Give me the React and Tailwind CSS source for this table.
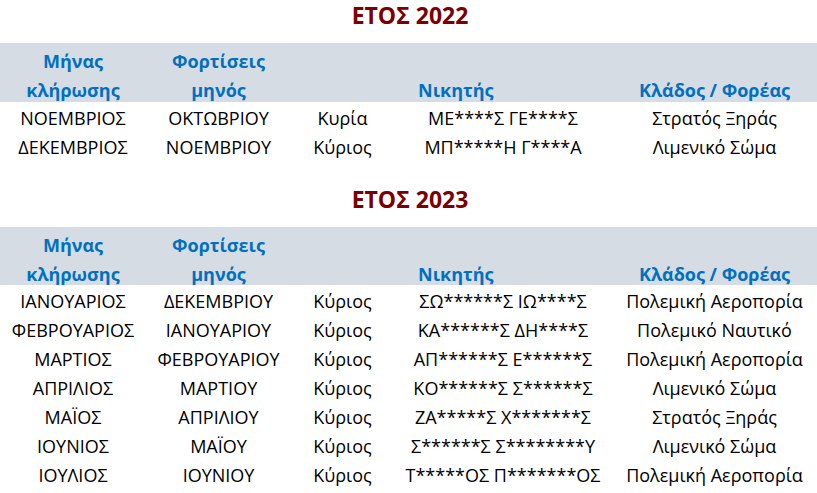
import React from "react";

const font = { fontFamily: '"Open Sans", "Noto Sans", sans-serif' };

const rows2022 = [
  ["ΝΟΕΜΒΡΙΟΣ", "ΟΚΤΩΒΡΙΟΥ", "Κυρία", "ΜΕ****Σ ΓΕ****Σ", "Στρατός Ξηράς"],
  ["ΔΕΚΕΜΒΡΙΟΣ", "ΝΟΕΜΒΡΙΟΥ", "Κύριος", "ΜΠ*****Η Γ****Α", "Λιμενικό Σώμα"],
];

const rows2023 = [
  ["ΙΑΝΟΥΑΡΙΟΣ", "ΔΕΚΕΜΒΡΙΟΥ", "Κύριος", "ΣΩ******Σ ΙΩ****Σ", "Πολεμική Αεροπορία"],
  ["ΦΕΒΡΟΥΑΡΙΟΣ", "ΙΑΝΟΥΑΡΙΟΥ", "Κύριος", "ΚΑ******Σ ΔΗ****Σ", "Πολεμικό Ναυτικό"],
  ["ΜΑΡΤΙΟΣ", "ΦΕΒΡΟΥΑΡΙΟΥ", "Κύριος", "ΑΠ******Σ Ε******Σ", "Πολεμική Αεροπορία"],
  ["ΑΠΡΙΛΙΟΣ", "ΜΑΡΤΙΟΥ", "Κύριος", "ΚΟ******Σ Σ******Σ", "Λιμενικό Σώμα"],
  ["ΜΑΪΟΣ", "ΑΠΡΙΛΙΟΥ", "Κύριος", "ΖΑ*****Σ Χ*******Σ", "Στρατός Ξηράς"],
  ["ΙΟΥΝΙΟΣ", "ΜΑΪΟΥ", "Κύριος", "Σ******Σ Σ********Υ", "Λιμενικό Σώμα"],
  ["ΙΟΥΛΙΟΣ", "ΙΟΥΝΙΟΥ", "Κύριος", "Τ*****ΟΣ Π*******ΟΣ", "Πολεμική Αεροπορία"],
];

const cols = "grid grid-cols-[146px_145px_103px_218px_205px]";

function HLine({ children, left }) {
  return (
    <div
      className={
        "h-[29.5px] flex items-end pb-[2px] leading-[20px] whitespace-nowrap " +
        (left ? "justify-start pl-[24px]" : "justify-center")
      }
    >
      {children}
    </div>
  );
}

function Header({ h }) {
  return (
    <div className={cols + " bg-[#d6dce4] text-[#0070c0] font-bold text-[18px] " + h}>
      <div className="flex flex-col justify-end">
        <HLine>Μήνας</HLine>
        <HLine>κλήρωσης</HLine>
      </div>
      <div className="flex flex-col justify-end">
        <HLine>Φορτίσεις</HLine>
        <HLine>μηνός</HLine>
      </div>
      <div />
      <div className="flex flex-col justify-end">
        <HLine left>Νικητής</HLine>
      </div>
      <div className="flex flex-col justify-end">
        <HLine>Κλάδος / Φορέας</HLine>
      </div>
    </div>
  );
}

function Row({ r }) {
  return (
    <div className={cols + " text-[18px] text-black"}>
      {r.map((c, i) => (
        <div
          key={i}
          className="h-[29px] flex items-end justify-center pb-[3px] leading-[20px] whitespace-nowrap"
        >
          {c}
        </div>
      ))}
    </div>
  );
}

function Title({ children, h }) {
  return (
    <div
      className={
        "flex items-end justify-center pb-[17px] text-[23px] leading-[22px] font-bold text-[#7b0000] pl-[3px] " +
        h
      }
    >
      {children}
    </div>
  );
}

export default function App() {
  return (
    <div className="w-[817px] h-[493px] bg-white overflow-hidden" style={font}>
      <Title h="h-[43px]">ΕΤΟΣ 2022</Title>
      <Header h="h-[59px]" />
      {rows2022.map((r, i) => (
        <Row key={i} r={r} />
      ))}
      <Title h="h-[67px]">ΕΤΟΣ 2023</Title>
      <Header h="h-[58px]" />
      {rows2023.map((r, i) => (
        <Row key={i} r={r} />
      ))}
    </div>
  );
}
